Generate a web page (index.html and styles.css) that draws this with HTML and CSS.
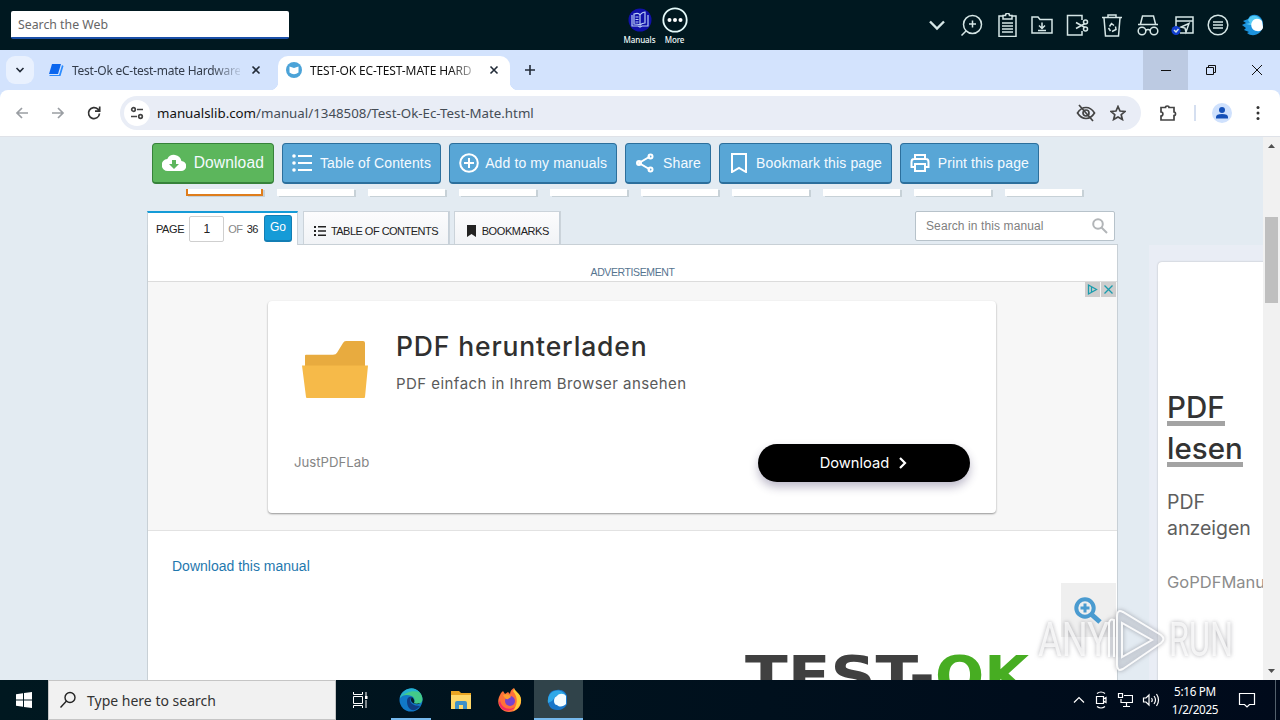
FILE: index.html
```html
<!DOCTYPE html>
<html lang="en">
<head>
    <meta charset="UTF-8">
    <meta name="viewport" content="width=device-width, initial-scale=1.0">
    <title>TEST-OK EC-TEST-MATE HARDWARE MANUAL</title>
    <link rel="stylesheet" href="styles.css">
</head>
<body>
    <!-- Desktop search bar -->
    <div class="appbar">
        <div class="web-search"><span>Search the Web</span></div>
        <div class="app-links">
            <div class="app-link">
                <svg width="28" height="28" viewBox="0 0 28 28"><circle cx="14" cy="14" r="11.500" fill="#1010a8"/><path d="M6 9v11h6l2 1 2-1h6V9M8 8c3-1 5-1 6 1v10c-2-1-4-1-6-1zM14 9c1-2 4-3 5-3v11c-2 0-4 1-5 2M9.500 11h3M9.500 13.500h3M9.500 16h3" fill="none" stroke="#b9cdf5" stroke-width="1.200"/></svg>
                <span>Manuals</span>
            </div>
            <div class="app-link">
                <svg width="28" height="28" viewBox="0 0 28 28"><circle cx="14" cy="14" r="11.700" fill="none" stroke="#e4fafa" stroke-width="1.800"/><g fill="#fff"><circle cx="8.500" cy="14" r="2"/><circle cx="14" cy="14" r="2"/><circle cx="19.500" cy="14" r="2"/></g></svg>
                <span>More</span>
            </div>
        </div>
        <div class="app-tools">
            <svg viewBox="0 0 24 24"><path d="M5 8.500l7 7 7-7" stroke-width="2.400"/></svg>
            <svg viewBox="0 0 24 24"><circle cx="12.500" cy="11.500" r="9"/><path d="M6 18l-4.500 4.500M12.500 7.500v7M9 11h7"/></svg>
            <svg viewBox="0 0 24 24"><path d="M8 3H4v20.500h17V3h-4M8 2.500h2.500c0-3 4-3 4 0H17V6H8zM7 10h11M7 13h11M7 16h11M7 19h11"/></svg>
            <svg viewBox="0 0 24 24"><path d="M2 4h6l2 2.500h12V20H2zM12 9.500v6M9 12.500l3 3 3-3M8 17.500h8"/></svg>
            <svg viewBox="0 0 24 24"><path d="M17 7V2.500H2.500V22H17v-4M11 9.500l9 5M11 15.500l9-5"/><circle cx="20.500" cy="9" r="2"/><circle cx="20.500" cy="16" r="2"/></svg>
            <svg viewBox="0 0 24 24"><path d="M2 4.500h20M4 5l1.500 18h13L20 5M8 4V2h8v2M9.500 13.500l2-3 2.500 2M15.500 13.500l.5 3-4 2M8.500 15l2 3"/></svg>
            <svg viewBox="0 0 24 24"><path d="M2 11.500h20M4.500 11L6.500 3h11l2 8M9.800 17.500c1-1.500 3.400-1.500 4.400 0"/><circle cx="6" cy="18" r="3.800"/><circle cx="18" cy="18" r="3.800"/></svg>
            <svg viewBox="0 0 24 24"><path d="M5 14V4h17v16H9M5 8h17M18 10.500l-8 3.500 4 1 1 4z"/><circle cx="5" cy="17.500" r="4.500" fill="#123fd0" stroke="none"/><path d="M3 17l2 2 2.500-3"/></svg>
            <svg viewBox="0 0 24 24"><circle cx="12" cy="12" r="9.800"/><path d="M7 9h10M7 12h10M7 15h10"/></svg>
            <svg class="tool-logo" viewBox="0 0 24 24"><path d="M9 3c8-4 14 3 13 10-1 8-10 12-16 7l2-1-5-2 2-2-4-3 4-2-3-2 5-2z" fill="#1c93dd"/><path d="M9 4c6-4 13 2 12 8H9l-4-1 4-1-2-3z" fill="#55cbf5"/><path d="M21 8c-3-3-8-3-10 1-2 3 0 9 5 9 4 1 6-2 6-4z" fill="#fff"/></svg>
        </div>
    </div>

    <!-- Browser window -->
    <div class="tabstrip">
        <div class="tab-search"><svg width="10" height="10" viewBox="0 0 10 10"><path d="M1.500 3L5 6.500 8.500 3"/></svg></div>
        <div class="tab">
            <svg width="16" height="16" viewBox="0 0 16 16"><path d="M4 2h9l-3 10H1z" fill="#0b66ee"/><path d="M14 3l1.500 1-3 10H2l-1-1h10z" fill="#2b8cff"/></svg>
            <span class="tab-title tab-title-off">Test-Ok eC-test-mate Hardware</span>
            <svg class="tab-x" width="10" height="10" viewBox="0 0 10 10"><path d="M1.500 1.500l7 7M8.500 1.500l-7 7"/></svg>
        </div>
        <div class="tab tab-on">
            <svg width="16" height="16" viewBox="0 0 16 16"><circle cx="8" cy="8" r="8" fill="#4ba3d8"/><path d="M3.500 4.500L8 6l4.500-1.500v6Q8 14 3.500 10.500z" fill="#fff"/></svg>
            <span class="tab-title tab-title-on">TEST-OK EC-TEST-MATE HARD</span>
            <svg class="tab-x" width="10" height="10" viewBox="0 0 10 10"><path d="M1.500 1.500l7 7M8.500 1.500l-7 7"/></svg>
        </div>
        <svg class="tab-plus" width="12" height="12" viewBox="0 0 12 12"><path d="M6 1v10M1 6h10"/></svg>
        <div class="win-buttons">
            <div class="win-btn win-min"><svg width="12" height="12" viewBox="0 0 12 12"><path d="M1 6.500h10"/></svg></div>
            <div class="win-btn"><svg width="12" height="12" viewBox="0 0 12 12"><path d="M1.500 3.500h7v7h-7zM3.500 3.500v-2h7v7h-2"/></svg></div>
            <div class="win-btn"><svg width="12" height="12" viewBox="0 0 12 12"><path d="M1 1l10 10M11 1L1 11"/></svg></div>
        </div>
    </div>
    <div class="toolbar">
        <div class="nav">
            <svg class="nav-off" viewBox="0 0 16 16"><path d="M14 8H3M8 3L3 8l5 5"/></svg>
            <svg class="nav-off" viewBox="0 0 16 16"><path d="M2 8h11M8 3l5 5-5 5"/></svg>
            <svg viewBox="0 0 16 16"><path d="M13.500 8.500a5.500 5.500 0 1 1-1.600-4.300l1.600 1.600M13.700 1.500v4.700H9"/></svg>
        </div>
        <div class="omnibox">
            <div class="site-info"><svg width="14" height="14" viewBox="0 0 14 14"><circle cx="3.500" cy="3.500" r="1.800"/><path d="M7 3.500h6M1 10.500h6"/><circle cx="10.500" cy="10.500" r="1.800"/></svg></div>
            <span class="url"><b>manualslib.com</b>/manual/1348508/Test-Ok-Ec-Test-Mate.html</span>
            <svg class="omni-eye" width="20" height="18" viewBox="0 0 20 18"><path d="M1.500 9Q5 3.500 10 3.500T18.500 9Q15 14.500 10 14.500T1.500 9zM3 1l14 16"/><circle cx="10" cy="9" r="3"/></svg>
            <svg width="16" height="16" viewBox="0 0 16 16"><path d="M8 1.500l2 4.500 5 .5-3.800 3.200 1.200 4.800L8 12l-4.400 2.500 1.200-4.800L1 6.500 6 6z"/></svg>
        </div>
        <svg class="ext" width="18" height="18" viewBox="0 0 18 18"><path d="M2 3.500h4.500c0-2 3.500-2 3.500 0h5V8c2 0 2 3.500 0 3.500V16H2v-4c2.500 0 2.500-4 0-4z"/></svg>
        <span class="bar-line"></span>
        <svg class="avatar" width="20" height="20" viewBox="0 0 20 20"><circle cx="10" cy="10" r="10" fill="#cfe1fd"/><circle cx="10" cy="7" r="3" fill="#1450b8"/><path d="M4 15.500v-1.500q0-3 6-3t6 3v1.500z" fill="#1450b8"/></svg>
        <svg class="dots" width="4" height="16" viewBox="0 0 4 16"><circle cx="2" cy="2.500" r="1.500"/><circle cx="2" cy="8" r="1.500"/><circle cx="2" cy="13.500" r="1.500"/></svg>
    </div>

    <div class="viewport">
        <div class="site">
            <div class="actions">
                <a class="btn btn-green"><svg width="24" height="24" viewBox="0 0 24 24"><path d="M19.400 10A7.500 7.500 0 0 0 5.300 8 6 6 0 0 0 6 20h13a5 5 0 0 0 .4-10zM17 13l-5 5-5-5h3V9h4v4z" fill="#fff"/></svg><span>Download</span></a>
                <a class="btn btn-toc"><svg width="22" height="20" viewBox="0 0 22 20"><g fill="#fff"><circle cx="3" cy="3" r="1.800"/><circle cx="3" cy="10" r="1.800"/><circle cx="3" cy="17" r="1.800"/><path d="M7 1.900h14v2.200H7zM7 8.900h14v2.200H7zM7 15.900h14v2.200H7z"/></g></svg><span>Table of Contents</span></a>
                <a class="btn btn-add"><svg width="20" height="20" viewBox="0 0 20 20"><circle cx="10" cy="10" r="8.800"/><path d="M10 5v10M5 10h10"/></svg><span>Add to my manuals</span></a>
                <a class="btn btn-share"><svg width="20" height="20" viewBox="0 0 20 20"><path d="M15 3.500L4 10l11 6.500"/><circle cx="15.500" cy="3.500" r="2"/><circle cx="4" cy="10" r="2"/><circle cx="15.500" cy="16.500" r="2"/></svg><span>Share</span></a>
                <a class="btn btn-mark"><svg width="20" height="20" viewBox="0 0 20 20"><path d="M3 1h14v18l-7-4-7 4z"/></svg><span>Bookmark this page</span></a>
                <a class="btn btn-print"><svg width="20" height="20" viewBox="0 0 20 20"><path d="M5 14H1.500V9Q1.500 6 4 6h12q2.500 0 2.500 3v5H15M5 6V2h10v4M5 11h10v7H5z"/></svg><span>Print this page</span></a>
            </div>
            <div class="thumbs">
                <i class="thumb thumb-on"></i><i class="thumb"></i><i class="thumb"></i><i class="thumb"></i><i class="thumb"></i><i class="thumb"></i><i class="thumb"></i><i class="thumb"></i><i class="thumb"></i><i class="thumb"></i>
            </div>

            <div class="columns">
                <div class="main">
                    <div class="page-tabs">
                        <div class="page-tab page-nav">
                            <span>PAGE</span><div class="page-input">1</div><span class="of">OF</span><span class="total">36</span><div class="go">Go</div>
                        </div>
                        <div class="page-tab grey-tab tab-toc"><svg width="12" height="12" viewBox="0 0 12 12"><path d="M0 1h2v2H0zM4 1h8v1.500H4zM0 5h2v2H0zM4 5.300h8v1.500H4zM0 9h2v2H0zM4 9.500h8v1.500H4z" fill="#222"/></svg><span>TABLE OF CONTENTS</span></div>
                        <div class="page-tab grey-tab tab-marks"><svg width="12" height="12" viewBox="0 0 12 12"><path d="M2 0h9v12L6.500 9 2 12z" fill="#222"/></svg><span>BOOKMARKS</span></div>
                        <div class="manual-search"><span>Search in this manual</span><svg width="16" height="16" viewBox="0 0 16 16"><circle cx="6" cy="6" r="4.800"/><path d="M9.500 9.500l5.500 5.500"/></svg></div>
                    </div>
                    <div class="paper">
                        <div class="ad-label">ADVERTISEMENT</div>
                        <div class="ad">
                            <div class="ad-choices">
                                <svg width="15" height="15" viewBox="0 0 15 15"><path d="M3.500 3v9l8-4.500zM6.500 5v5"/></svg>
                                <svg width="15" height="15" viewBox="0 0 15 15"><path d="M3.500 3.500l8 8M11.500 3.500l-8 8"/></svg>
                            </div>
                            <div class="ad-card">
                                <div class="ad-top">
                                    <svg width="66" height="57" viewBox="0 0 66 58" preserveAspectRatio="none"><path d="M3 28V15q0-1 1-1h27q3 0 4-2l6-10q1-2 3-2h17q2 0 2 2v26z" fill="#e8ab3f"/><path d="M0 25h66l-3 32q0 1-1 1H5q-1 0-1-1z" fill="#f6ba49"/></svg>
                                    <div>
                                        <div class="ad-title">PDF herunterladen</div>
                                        <div class="ad-text">PDF einfach in Ihrem Browser ansehen</div>
                                    </div>
                                </div>
                                <div class="ad-bottom">
                                    <span class="ad-brand">JustPDFLab</span>
                                    <div class="ad-button"><span>Download</span><svg width="10" height="12" viewBox="0 0 10 12"><path d="M2 1l5 5-5 5"/></svg></div>
                                </div>
                            </div>
                        </div>
                        <div class="document">
                            <a class="download-link">Download this manual</a>
                            <div class="zoom-in"><svg width="30" height="30" viewBox="0 0 30 30"><circle cx="12" cy="12" r="8.700"/><path d="M18 18l9 8" stroke-width="5"/><path d="M12 7.500v9M7.500 12h9" stroke-width="3"/></svg></div>
                            <svg class="brand" width="300" height="30" viewBox="0 0 300 30"><text x="1" y="44" class="brand-test" textLength="190" lengthAdjust="spacingAndGlyphs">TEST-</text><text x="191" y="44" class="brand-ok" textLength="94" lengthAdjust="spacingAndGlyphs">OK</text></svg>
                        </div>
                    </div>
                </div>
                <div class="side">
                    <div class="side-card">
                        <div class="side-title"><span>PDF</span><br><span>lesen</span></div>
                        <div class="side-text">PDF<br>anzeigen</div>
                        <div class="side-brand">GoPDFManu</div>
                    </div>
                </div>
            </div>
        </div>
        <div class="scrollbar">
            <svg width="7" height="4" viewBox="0 0 7 4"><path d="M3.500 0L7 4H0z"/></svg>
            <i class="scroll-thumb"></i>
            <svg width="7" height="4" viewBox="0 0 7 4"><path d="M0 0h7L3.500 4z"/></svg>
        </div>
    </div>

    <!-- Watermark lies over the page -->
    <svg class="watermark" width="210" height="70" viewBox="0 0 210 70">
        <text x="2" y="50" textLength="71" lengthAdjust="spacingAndGlyphs">ANY</text>
        <path d="M73 51V17q1-5 5-3v37"/><path d="M81 10q0-7 6-4l38 23q5 4 0 8L87 63q-6 3-6-4zM86 17v34l30-17z"/>
        <text x="133" y="50" textLength="64" lengthAdjust="spacingAndGlyphs">RUN</text>
    </svg>

    <div class="taskbar">
        <div class="start"><svg width="16" height="16" viewBox="0 0 16 16"><path d="M0 2.300L7 1.200v6.300H0zM8 1l8-1v7.500H8zM0 8.500h7v6.300l-7-1zM8 8.500h8V16l-8-1z" fill="#fff"/></svg></div>
        <div class="task-search"><svg width="18" height="18" viewBox="0 0 18 18"><circle cx="11" cy="6.500" r="5"/><path d="M7.500 10L1.500 16.500"/></svg><span>Type here to search</span></div>
        <div class="task task-view"><svg width="16" height="16" viewBox="0 0 16 16"><path d="M1.500 0v2.500h9V0M1.500 16v-2.500h9V16M1.500 4.500h9v7h-9zM14 0v4M14 8v8" fill="none" stroke="#fff"/><path d="M13 4h2.500v3H13z" fill="#fff"/></svg></div>
        <div class="task task-run"><svg width="24" height="24" viewBox="0 0 24 24"><circle cx="12" cy="12" r="11.500" fill="#1179c8"/><path d="M1 10C4-3 23-1 23.500 11c0 5-5 6-9 4 2-2 1-6-2-7C8 6 3 7 1 10z" fill="#43c989"/><path d="M1 10C4 0 15-3 20 4c-6-2-14 0-19 6z" fill="#25b1d1"/><path d="M8 13c0-3 2-5 5-4-4 4-1 9 8 9-5 7-13 5-13-5z" fill="#103d83"/><path d="M13 9c-3 4 1 8 7 7l1-1c-3 1-5 1-6 0 1-2 0-4-2-6z" fill="#041b28"/></svg></div>
        <div class="task"><svg width="22" height="22" viewBox="0 0 22 22"><path d="M1 2h8l2 2h10v16H1z" fill="#e9a522"/><path d="M1 6h20v14H1z" fill="#ffd869"/><path d="M5 20v-6q0-2 2-2h8q2 0 2 2v6h-4v-4H9v4z" fill="#3f91c8"/></svg></div>
        <div class="task"><svg width="24" height="24" viewBox="0 0 24 24"><path d="M3 5l2-2 2 3 3-2 2 2c0-3 2-5 4-6 0 3 6 5 7 11 1 8-5 13-12 13S-2 17 1 9z" fill="#ff7139"/><path d="M15 3c1-1 1-2 1-3 1 4 7 5 7 12s-5 10-8 11c4-5 6-13 0-20z" fill="#ffce36"/><path d="M2 12c1 8 9 11 15 7-3 5-14 6-16-4z" fill="#f52b62"/><circle cx="12" cy="13" r="5" fill="#7743ce"/><path d="M5 7c4-2 7 0 8 2l-3 2c-1 1-3 0-5-4z" fill="#ff9e30"/></svg></div>
        <div class="task task-active"><svg width="22" height="22" viewBox="0 0 22 22"><path d="M10 1c6-1 9 3 10 6v8c-2 4-5 6-10 6C4 21 1 17 1 11S4 1 10 1z" fill="#1875c9"/><path d="M3 5c5-6 14-4 16 2H9l-4 5-4 2Q0 9 3 5z" fill="#2ea8e8"/><path d="M19 7c-2-3-7-3-9 0-4 1-4 9 0 9 3 3 7 1 9-1z" fill="#f4fcff"/></svg></div>
        <div class="tray">
            <svg width="12" height="8" viewBox="0 0 12 8"><path d="M1 6.500l5-5 5 5"/></svg>
            <svg width="14" height="18" viewBox="0 0 14 18"><path d="M3 2.500q4-3 8 0M3 15.500q4 3 8 0M2.500 5.500h7v7h-7zM9.500 8l2.500-1.500v5L9.500 10"/></svg>
            <svg width="16" height="16" viewBox="0 0 16 16"><path d="M1.500 1.500h4v4h-4zM7 3.500h8.500v7H4V7M9.500 11v3M6 14.500h7"/></svg>
            <svg width="18" height="16" viewBox="0 0 18 16"><path d="M1.500 6v4H4l3 3V3L4 6zM9.500 6q1.500 2 0 4M12 4q3 4 0 8M14.500 2q4 6 0 12"/></svg>
        </div>
        <div class="clock">5:16 PM<br>1/2/2025</div>
        <svg class="notes" width="18" height="18" viewBox="0 0 18 18"><path d="M1.500 2.500h15v11h-5L9 16l-2.500-2.500h-5z"/></svg>
        <i class="show-desktop"></i>
    </div>
</body>
</html>
```
FILE: styles.css
```css
* {
    box-sizing: border-box;
}

body {
    margin: 0;
    width: 1280px;
    height: 720px;
    overflow: hidden;
    position: relative;
    display: flex;
    flex-direction: column;
    font-family: "Liberation Sans", Arial, sans-serif;
    color: #222;
    background-color: #e3ebf2;
}

svg {
    display: block;
    flex: none;
}

span, a {
    white-space: nowrap;
}

/* Top bar */
.appbar {
    height: 50px;
    flex: none;
    display: flex;
    align-items: center;
    background-color: #001820;
    padding-left: 11px;
    font-family: "Noto Sans", "Open Sans", sans-serif;
}

.web-search {
    width: 278px;
    height: 28px;
    margin-top: -1px;
    padding: 0 7px;
    background-color: #fff;
    border-bottom: 2px solid #1a4fa8;
    border-radius: 2px;
    font-size: 12.3px;
    line-height: 28px;
    color: #666;
}

.app-links {
    display: flex;
    margin-left: 333px;
}

.app-link {
    width: 35px;
    height: 46px;
    display: flex;
    flex-direction: column;
    align-items: center;
    padding-top: 2px;
    font-size: 8px;
    line-height: 10px;
    font-weight: 500;
    letter-spacing: -.1px;
    color: #f2fbfb;
}

.app-link svg {
    margin-top: 2px;
    margin-bottom: 1px;
}

.app-tools {
    display: flex;
    margin-left: 233px;
    gap: 11.1px;
}

.app-tools svg {
    width: 24px;
    height: 24px;
    fill: none;
    stroke: #d5e6e6;
    stroke-width: 1.5;
}

.app-tools .tool-logo {
    stroke: none;
}

/* Browser tabs */
.tabstrip {
    height: 40px;
    flex: none;
    display: flex;
    align-items: center;
    background-color: #d3e3fd;
    box-shadow: 0 8px 0 #d3e3fd;
    padding-left: 6px;
    font-family: "Noto Sans", sans-serif;
    font-size: 12px;
}

.tab-search {
    width: 28px;
    height: 28px;
    border-radius: 9px;
    background-color: #e9f1fe;
    display: flex;
    align-items: center;
    justify-content: center;
}

.tab-search path, .tab-x path, .tab-plus path {
    fill: none;
    stroke: #222b38;
    stroke-width: 1.6;
}

.tab {
    width: 244px;
    height: 34px;
    padding-left: 14px;
    display: flex;
    align-items: center;
}

.tab-title {
    width: 168px;
    margin-left: 8px;
    -webkit-mask-image: linear-gradient(to right, #000 140px, transparent 172px);
}

.tab-title-off {
    letter-spacing: -.25px;
    color: #333c4a;
}

.tab-title-on {
    letter-spacing: -.12px;
    color: #111;
}

.tab-x {
    margin-left: 11px;
}

.tab-on {
    width: 232px;
    height: 34px;
    margin-top: 6px;
    padding: 0 0 6px 8px;
    background-color: #fff;
    border-radius: 10px 10px 0 0;
    position: relative;
}

.tab-on::before, .tab-on::after {
    content: "";
    position: absolute;
    bottom: 0;
    width: 8px;
    height: 8px;
}

.tab-on::before {
    left: -8px;
    background: radial-gradient(circle at 0 0, transparent 8px, #fff 8.5px);
}

.tab-on::after {
    right: -8px;
    background: radial-gradient(circle at 100% 0, transparent 8px, #fff 8.5px);
}

.tab-plus {
    margin-left: 14px;
}

.win-buttons {
    display: flex;
    margin-left: auto;
}

.win-btn {
    width: 46px;
    height: 40px;
    display: flex;
    align-items: center;
    justify-content: center;
}

.win-min {
    background-color: #bccae2;
    width: 45px;
}

.win-btn path {
    fill: none;
    stroke: #111;
}

/* Address bar */
.toolbar {
    height: 47px;
    flex: none;
    display: flex;
    align-items: center;
    background-color: #fff;
    border-bottom: 1px solid #dfe2e8;
    padding-left: 14px;
    border-radius: 8px 8px 0 0;
}

.toolbar path, .toolbar circle {
    stroke-width: 1.7;
}

.nav {
    display: flex;
    gap: 20px;
}

.nav svg {
    width: 16px;
    height: 16px;
    fill: none;
    stroke: #333;
}

.nav .nav-off {
    stroke: #9a9ea3;
}

.omnibox {
    width: 1021px;
    height: 34px;
    margin-left: 18px;
    padding: 0 15px 0 4px;
    display: flex;
    align-items: center;
    border-radius: 17px;
    background-color: #e9edf6;
}

.omnibox svg, .ext {
    fill: none;
    stroke: #444;
}

.site-info {
    width: 26px;
    height: 26px;
    border-radius: 50%;
    background-color: #fff;
    display: flex;
    align-items: center;
    justify-content: center;
}

.url {
    margin-left: 7px;
    font-family: "Noto Sans", sans-serif;
    font-size: 13.3px;
    color: #444c55;
}

.url b {
    font-weight: 400;
    color: #111;
}

.omni-eye {
    margin-left: auto;
    margin-right: 14px;
}

.ext {
    margin-left: 18px;
}

.bar-line {
    width: 2px;
    height: 16px;
    margin-left: 17px;
    background-color: #d5dff0;
}

.avatar {
    margin-left: 16px;
}

.dots {
    margin-left: 24px;
    fill: #333;
}

/* Page */
.viewport {
    height: 543px;
    flex: none;
    display: flex;
}

.site {
    width: 1263px;
    overflow: hidden;
}

.actions {
    display: flex;
    gap: 8px;
    padding: 6px 0 0 152px;
}

.btn {
    height: 41px;
    display: flex;
    align-items: center;
    justify-content: space-between;
    padding: 0 9px 1px 9px;
    border: 1px solid #2c6f9c;
    border-bottom-width: 2px;
    border-radius: 4px;
    background-color: #58a6d6;
    color: #f4faff;
    font-size: 14px;
    letter-spacing: .12px;
}

.btn svg {
    fill: none;
    stroke: #fff;
    stroke-width: 2;
}

.btn-green {
    width: 122px;
    background-color: #5cb65c;
    border-color: #36823a;
    font-size: 15.6px;
}

.btn-green svg {
    stroke: none;
}

.btn-toc {
    width: 159px;
    padding-left: 8px;
}

.btn-toc svg {
    stroke: none;
}

.btn-add {
    width: 168px;
}

.btn-share {
    width: 86px;
}

.btn-mark {
    width: 173px;
}

.btn-print {
    width: 139px;
}

.thumbs {
    display: flex;
    gap: 14px;
    padding: 5px 0 0 186px;
}

.thumb {
    width: 77px;
    height: 7px;
    background-color: #fff;
    box-shadow: 2px 1px 0 #c7d1d7;
}

.thumb-on {
    border: 2px solid #df7d1c;
    border-top: 0;
}

.columns {
    display: flex;
    padding: 15px 0 0 147px;
}

.main {
    width: 971px;
    flex: none;
}

.page-tabs {
    height: 33px;
    display: flex;
}

.page-tab {
    height: 33px;
    display: flex;
    align-items: center;
    font-size: 11px;
    letter-spacing: -.4px;
    border: 1px solid #cbd3da;
    border-bottom: 0;
}

.page-nav {
    width: 151px;
    height: 34px;
    border-top: 2px solid #159bd7;
    background-color: #fff;
    padding: 0 5px 1px 8px;
    position: relative;
}

.page-input {
    width: 35px;
    height: 26px;
    margin: 0 4px 0 5px;
    border: 1px solid #cfcfcf;
    border-radius: 2px;
    font-size: 12px;
    line-height: 25px;
    text-align: center;
}

.of {
    color: #888;
}

.total {
    margin-left: 4px;
}

.go {
    width: 28px;
    height: 27px;
    margin-left: auto;
    border: 1px solid #137eb4;
    border-bottom-width: 2px;
    border-radius: 3px;
    background-color: #159bd7;
    color: #fff;
    font-size: 12px;
    line-height: 23px;
    letter-spacing: 0;
    text-align: center;
}

.grey-tab {
    margin-left: 5px;
    padding: 5px 11px 0 10px;
    justify-content: space-between;
    background: linear-gradient(#fcfcfd, #f1f3f6);
    box-shadow: inset -1px 0 #c6d0d9;
}

.tab-toc {
    width: 147px;
    letter-spacing: -.52px;
}

.tab-marks {
    width: 107px;
    margin-left: 4px;
}

.manual-search {
    width: 200px;
    height: 30px;
    margin-left: auto;
    margin-right: 3px;
    padding: 0 6px 0 10px;
    display: flex;
    align-items: center;
    justify-content: space-between;
    border: 1px solid #b7c2ca;
    border-radius: 2px;
    background-color: #fff;
    font-size: 12px;
    letter-spacing: .1px;
    color: #808080;
}

.manual-search svg {
    fill: none;
    stroke: #b2b5b8;
    stroke-width: 2;
}

.paper {
    height: 440px;
    background-color: #fff;
    border: 1px solid #c8d0d6;
}

.ad-label {
    height: 36px;
    padding-top: 20px;
    text-align: center;
    font-size: 10.5px;
    line-height: 14px;
    letter-spacing: -.4px;
    color: #56748f;
}

.ad {
    height: 250px;
    padding: 19px 0 0 120px;
    border-top: 1px solid #dcdcdc;
    border-bottom: 1px solid #e2e2e2;
    background-color: #f7f7f7;
    position: relative;
}

.ad-choices {
    position: absolute;
    top: 0;
    right: 1px;
    display: flex;
    gap: 1px;
}

.ad-choices svg {
    background-color: #cdcdcd;
    fill: none;
    stroke: #1a9cad;
    stroke-width: 1.3;
}

.ad-card {
    width: 728px;
    height: 212px;
    padding: 27px 26px 31px 34px;
    display: flex;
    flex-direction: column;
    justify-content: space-between;
    border-radius: 4px;
    background-color: #fff;
    box-shadow: 0 1px 2px rgba(0, 0, 0, .4);
    font-family: Inter, "Open Sans", sans-serif;
}

.ad-top {
    display: flex;
    gap: 28px;
}

.ad-top svg {
    margin-top: 13px;
}

.ad-title {
    font-size: 26.5px;
    line-height: 36px;
    font-weight: 500;
    letter-spacing: .85px;
    color: #303030;
}

.ad-text {
    margin-top: 10px;
    font-size: 15px;
    line-height: 20px;
    letter-spacing: .45px;
    color: #5a5a5a;
}

.ad-bottom {
    display: flex;
    align-items: center;
    justify-content: space-between;
    margin-left: -8px;
}

.ad-brand {
    font-size: 13.2px;
    margin-top: -2px;
    color: #858585;
}

.ad-button {
    width: 212px;
    height: 38px;
    display: flex;
    align-items: center;
    justify-content: center;
    gap: 9px;
    padding-bottom: 1px;
    border-radius: 19px;
    background-color: #000;
    box-shadow: 0 5px 10px rgba(50, 40, 90, .32);
    color: #fff;
    font-size: 14.7px;
}

.ad-button path {
    fill: none;
    stroke: #fff;
    stroke-width: 2.2;
}

.document {
    height: 150px;
    position: relative;
    padding: 26px 24px;
}

.download-link {
    font-size: 14px;
    color: #1f78ae;
}

.zoom-in {
    position: absolute;
    top: 52px;
    right: 1px;
    width: 55px;
    height: 54px;
    padding: 13px 0 0 12px;
    background-color: #efefef;
}

.zoom-in svg {
    fill: none;
    stroke: #4a9bd0;
    stroke-width: 4;
}

.brand {
    position: absolute;
    left: 596px;
    top: 119px;
    overflow: hidden;
}

.brand text {
    font-family: "DejaVu Sans", sans-serif;
    font-size: 54px;
    font-weight: 700;
}

.brand-test {
    fill: #404040;
}

.brand-ok {
    fill: #47ad22;
}

.side {
    width: 200px;
    height: 480px;
    flex: none;
    margin: 34px 0 0 31px;
    padding: 17px 0 0 9px;
    background-color: #e9edf5;
}

.side-card {
    height: 450px;
    padding: 125px 9px;
    background-color: #fff;
    border-radius: 4px 0 0 0;
    box-shadow: 0 0 2px rgba(0, 0, 0, .25);
    font-family: Inter, sans-serif;
}

.side-title {
    font-size: 29.5px;
    line-height: 41px;
    font-weight: 500;
    color: #333;
}

.side-title span {
    display: inline-block;
    height: 39px;
    border-bottom: 5px solid #a3a3a3;
}

.side-text {
    margin-top: 20px;
    font-size: 19.5px;
    line-height: 26px;
    color: #5e5e5e;
}

.side-brand {
    margin-top: 31px;
    font-size: 16.5px;
    line-height: 20px;
    color: #8c8c8c;
}

.scrollbar {
    width: 17px;
    padding: 7px 2px 7px;
    display: flex;
    flex-direction: column;
    align-items: center;
    justify-content: space-between;
    background-color: #f1f1f1;
    fill: #505050;
}

.scroll-thumb {
    width: 13px;
    height: 86px;
    margin-top: 69px;
    margin-bottom: auto;
    background-color: #bfbfbf;
}

.watermark {
    position: absolute;
    left: 1036px;
    top: 606px;
    fill: rgba(255, 255, 255, .75);
    filter: drop-shadow(0 0 2px rgba(70, 70, 80, .55));
}

.watermark text {
    font-family: Roboto, sans-serif;
    font-size: 48px;
    font-weight: 400;
}

.watermark path {
    fill: rgba(220, 226, 235, .35);
    stroke: rgba(255, 255, 255, .9);
    stroke-width: 2;
}

/* Taskbar */
.taskbar {
    height: 40px;
    flex: none;
    display: flex;
    align-items: center;
    background: linear-gradient(to right, #001820, #00101d 60%, #000a1b);
    color: #fff;
    font-family: "Noto Sans", "Open Sans", sans-serif;
}

.start {
    width: 48px;
    padding-left: 16px;
}

.task-search {
    width: 288px;
    height: 40px;
    padding-left: 10px;
    display: flex;
    align-items: center;
    gap: 10px;
    border: 1px solid #c5c5c5;
    background-color: #f1f1f1;
    color: #333;
    font-size: 14px;
}

.task-search svg {
    fill: none;
    stroke: #222;
    stroke-width: 1.4;
}

.task {
    width: 49px;
    height: 40px;
    display: flex;
    align-items: center;
    justify-content: center;
}

.task-view {
    padding-right: 2px;
}

.task-run {
    width: 51px;
    background: linear-gradient(#76b9ed, #76b9ed) center bottom / 40px 2px no-repeat;
}

.task-active {
    background-color: #30434a;
    border-bottom: 2px solid #76b9ed;
    padding: 2px 2px 0 0;
}

.tray {
    display: flex;
    align-items: center;
    gap: 9px;
    margin-left: auto;
}

.tray svg, .notes {
    fill: none;
    stroke: #fff;
    stroke-width: 1.2;
}

.clock {
    width: 64px;
    margin-left: 3px;
    text-align: center;
    font-size: 11.7px;
    line-height: 18px;
    letter-spacing: -.3px;
}

.notes {
    margin-left: 11px;
}

.show-desktop {
    width: 1px;
    height: 40px;
    margin-left: 19px;
    margin-right: 4px;
    background-color: #53606c;
}
```
